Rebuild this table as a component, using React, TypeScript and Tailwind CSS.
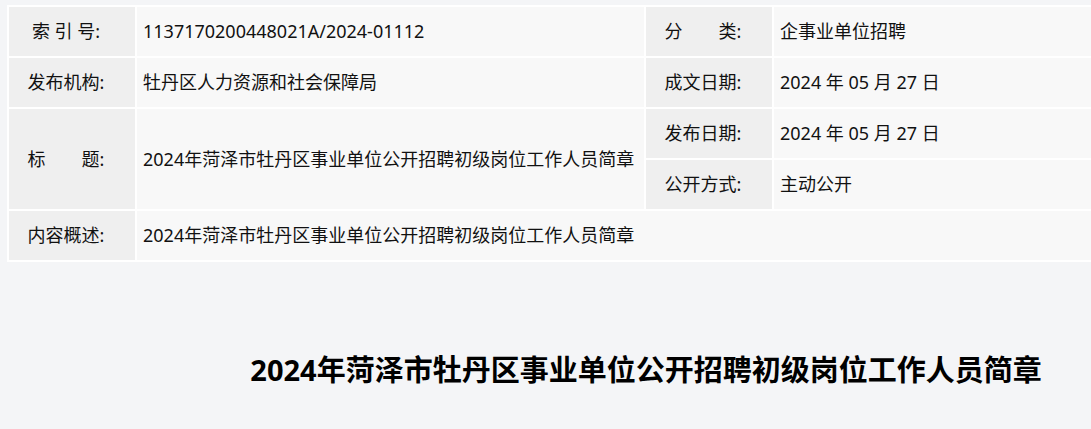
import React from "react";

const FONT = { fontFamily: '"Noto Sans", "Noto Sans CJK SC", sans-serif' };

const TITLE = "2024年菏泽市牡丹区事业单位公开招聘初级岗位工作人员简章";

function Label({ children, className = "" }: { children: React.ReactNode; className?: string }) {
  return (
    <div className={"bg-[#efefef] flex items-center justify-center pr-[12px] text-[18px] text-[#111] whitespace-pre " + className}>
      {children}
    </div>
  );
}

function Value({ children, className = "" }: { children: React.ReactNode; className?: string }) {
  return (
    <div className={"bg-[#f8f8f8] flex items-center pl-[6px] text-[18px] text-[#111] whitespace-nowrap " + className}>
      {children}
    </div>
  );
}

export default function App() {
  return (
    <div className="min-h-screen w-full overflow-hidden bg-[#f4f5f7]" style={FONT}>
      <div className="w-[1278px] ml-[7px] pt-[5px]">
        {/* info table */}
        <div className="grid grid-cols-[126px_507px_126px_1fr] auto-rows-[49px] gap-[2px] p-[2px] bg-white">
          <Label>索 引 号:</Label>
          <Value>1137170200448021A/2024-01112</Value>
          <Label>分　　类:</Label>
          <Value>企事业单位招聘</Value>

          <Label>发布机构:</Label>
          <Value>牡丹区人力资源和社会保障局</Value>
          <Label>成文日期:</Label>
          <Value>2024 年 05 月 27 日</Value>

          <Label className="row-span-2">标　　题:</Label>
          <Value className="row-span-2">{TITLE}</Value>
          <Label>发布日期:</Label>
          <Value>2024 年 05 月 27 日</Value>
          <Label>公开方式:</Label>
          <Value>主动公开</Value>

          <Label>内容概述:</Label>
          <Value className="col-span-3">{TITLE}</Value>
        </div>

        <h1 className="mt-[86px] text-center text-[29px] leading-[44px] font-bold text-black">{TITLE}</h1>
      </div>
    </div>
  );
}
